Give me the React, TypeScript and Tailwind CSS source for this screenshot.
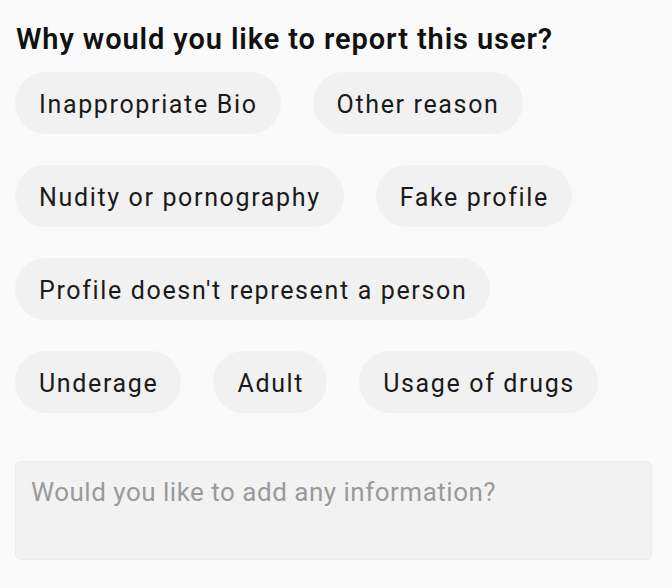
import { useState } from "react";

const rows = [
  ["Inappropriate Bio", "Other reason"],
  ["Nudity or pornography", "Fake profile"],
  ["Profile doesn't represent a person"],
  ["Underage", "Adult", "Usage of drugs"],
];

export default function App() {
  const [selected, setSelected] = useState<string | null>(null);
  const [info, setInfo] = useState("");

  return (
    <div
      className="w-[672px] h-[588px] bg-[#fafafa] px-[15px] pt-[21px] text-[#111]"
      style={{ fontFamily: "Roboto, 'Noto Sans', sans-serif" }}
    >
      <h2 className="text-[29px] font-semibold leading-[36px] tracking-[0.9px] pl-[1px] text-[#111]">
        Why would you like to report this user?
      </h2>

      {/* Reason chips */}
      <div className="mt-[15px] flex flex-col gap-y-[31px]">
        {rows.map((row, i) => (
          <div key={i} className="flex gap-x-[32px]">
            {row.map((r) => (
              <button
                key={r}
                onClick={() => setSelected(r)}
                className={`h-[62px] pl-[24px] pr-[23px] pt-[3px] rounded-full text-[25px] tracking-[1.65px] text-[#1a1a1a] ${
                  selected === r ? "bg-[#e2e2e2]" : "bg-[#f1f1f1]"
                }`}
              >
                {r}
              </button>
            ))}
          </div>
        ))}
      </div>

      <textarea
        value={info}
        onChange={(e) => setInfo(e.target.value)}
        placeholder="Would you like to add any information?"
        className="mt-[48px] block w-[637px] h-[99px] resize-none rounded-[6px] border border-[#ececec] bg-[#f2f2f2] px-[15px] py-[14px] text-[26px] leading-[32px] tracking-[0.5px] text-[#333] placeholder:text-[#9a9a9a] outline-none"
      />
    </div>
  );
}
